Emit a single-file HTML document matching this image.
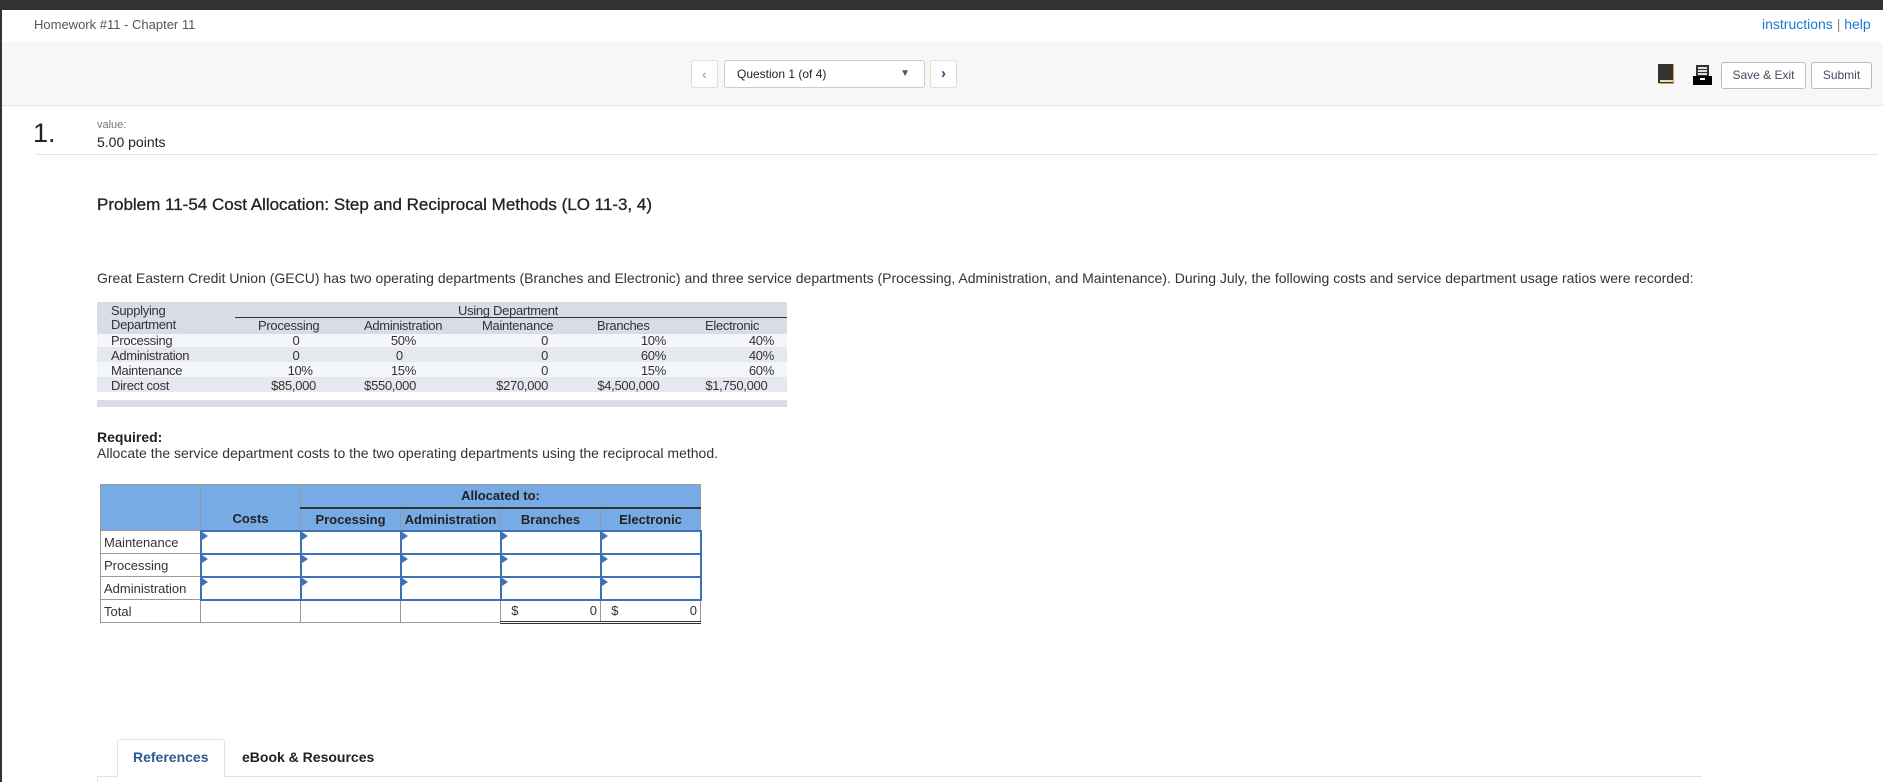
<!DOCTYPE html>
<html><head><meta charset="utf-8"><style>
*{margin:0;padding:0;box-sizing:border-box}
body{width:1883px;height:782px;overflow:hidden;background:#fff;font-family:"Liberation Sans",Arial,sans-serif;position:relative;color:#333}
.a{position:absolute;white-space:nowrap}
.dt{font-size:13px;color:#333;letter-spacing:-0.3px}
.r{text-align:right}
.c{text-align:center}
table.ans{position:absolute;left:100px;top:484px;border-collapse:collapse;font-size:13px}
table.ans td{border:1px solid #999;height:23px;width:100px;padding:0 3px}
.h{background:#77abe6;font-weight:bold;text-align:center;color:#222}
.in{position:relative;border:2px solid #3f72b5!important}
.in:before{content:"";position:absolute;left:0;top:0;border-left:6px solid #3f72b5;border-top:4px solid transparent;border-bottom:4px solid transparent}
</style></head><body>
<div class="a" style="left:0;top:0;width:1883px;height:10px;background:#333"></div>
<div class="a" style="left:0;top:0;width:2px;height:782px;background:#333"></div>
<div class="a" style="left:34px;top:17px;font-size:13px;color:#555">Homework #11 - Chapter 11</div>
<div class="a" style="left:1762px;top:16px;font-size:14px;color:#1a7ad4">instructions <span style="color:#888">|</span> help</div>
<div class="a" style="left:2px;top:42px;width:1881px;height:64px;background:#f7f7f7;border-bottom:1px solid #e6e6e6"></div>
<div class="a" style="left:691px;top:60px;width:27px;height:28px;border:1px solid #ddd;border-radius:3px;background:#fff;color:#7a9cc6;font-size:14px;text-align:center;line-height:26px">&lsaquo;</div>
<div class="a" style="left:724px;top:60px;width:201px;height:28px;border:1px solid #ccc;border-radius:3px;background:#fff;font-size:12px;color:#222;line-height:26px;padding-left:12px">Question 1 (of 4)<span style="position:absolute;right:14px;top:0;color:#555;font-size:10px">&#9660;</span></div>
<div class="a" style="left:930px;top:60px;width:27px;height:28px;border:1px solid #ddd;border-radius:3px;background:#fff;color:#1a4f8b;font-size:15px;font-weight:bold;text-align:center;line-height:25px">&rsaquo;</div>
<svg class="a" style="left:1657px;top:64px" width="18" height="21" viewBox="0 0 18 21"><rect x="2" y="0" width="15" height="20" fill="#e89a2c"/><rect x="1" y="0" width="15" height="19" fill="#333"/><rect x="3" y="16" width="13" height="2" fill="#ddd"/></svg>
<svg class="a" style="left:1693px;top:65px" width="19" height="20" viewBox="0 0 19 20"><rect x="3" y="0" width="13" height="12" fill="#333"/><rect x="5" y="2" width="9" height="8" fill="#ddd"/><rect x="5" y="4" width="9" height="1" fill="#333"/><rect x="5" y="7" width="9" height="1" fill="#333"/><rect x="0" y="11" width="19" height="9" fill="#000"/><rect x="7" y="13" width="5" height="2" fill="#fff"/></svg>
<div class="a" style="left:1721px;top:62px;width:85px;height:27px;border:1px solid #bbb;border-radius:3px;background:#fff;font-size:12px;color:#444b5e;text-align:center;line-height:25px">Save &amp; Exit</div>
<div class="a" style="left:1811px;top:62px;width:61px;height:27px;border:1px solid #bbb;border-radius:3px;background:#fff;font-size:12px;color:#444b5e;text-align:center;line-height:25px">Submit</div>
<div class="a" style="left:33px;top:118px;font-size:27px;color:#222">1.</div>
<div class="a" style="left:97px;top:119px;font-size:11px;color:#777">value:</div>
<div class="a" style="left:97px;top:134px;font-size:14px;color:#222">5.00 points</div>
<div class="a" style="left:36px;top:154px;width:1842px;height:1px;background:#e3e3e3"></div>
<div class="a" style="left:97px;top:195px;font-size:17px;color:#222;-webkit-text-stroke:0.3px #222">Problem 11-54 Cost Allocation: Step and Reciprocal Methods (LO 11-3, 4)</div>
<div class="a" style="left:97px;top:270px;font-size:14px;color:#333;letter-spacing:0px">Great Eastern Credit Union (GECU) has two operating departments (Branches and Electronic) and three service departments (Processing, Administration, and Maintenance). During July, the following costs and service department usage ratios were recorded:</div>
<!-- data table -->
<div class="a" style="left:97px;top:302px;width:690px;height:32px;background:#d9dce6"></div>
<div class="a" style="left:97px;top:347px;width:690px;height:15px;background:#e6e8ef"></div>
<div class="a" style="left:97px;top:377px;width:690px;height:15px;background:#e6e8ef"></div>
<div class="a" style="left:97px;top:334px;width:690px;height:13px;background:#f5f6f9"></div>
<div class="a" style="left:97px;top:362px;width:690px;height:15px;background:#f5f6f9"></div>
<div class="a" style="left:97px;top:400px;width:690px;height:7px;background:#d9dce6"></div>
<div class="a" style="left:235px;top:317px;width:552px;height:1px;background:#333"></div>
<div class="a dt" style="left:111px;top:303px">Supplying</div>
<div class="a dt" style="left:111px;top:317px">Department</div>
<div class="a dt" style="left:458px;top:303px">Using Department</div>
<div class="a dt" style="left:258px;top:318px">Processing</div>
<div class="a dt" style="left:364px;top:318px">Administration</div>
<div class="a dt" style="left:482px;top:318px">Maintenance</div>
<div class="a dt" style="left:597px;top:318px">Branches</div>
<div class="a dt" style="left:705px;top:318px">Electronic</div>
<div class="a dt" style="left:111px;top:333px;line-height:15px">Processing<br>Administration<br>Maintenance<br>Direct cost</div>
<div class="a dt r" style="left:250px;width:66px;top:333px;line-height:15px">0&nbsp;&nbsp;&nbsp;&nbsp;&nbsp;<br>0&nbsp;&nbsp;&nbsp;&nbsp;&nbsp;<br>10%&nbsp;<br>$85,000</div>
<div class="a dt r" style="left:350px;width:66px;top:333px;line-height:15px">50%<br>0&nbsp;&nbsp;&nbsp;&nbsp;<br>15%<br>$550,000</div>
<div class="a dt r" style="left:480px;width:68px;top:333px;line-height:15px">0<br>0<br>0<br>$270,000</div>
<div class="a dt r" style="left:570px;width:96px;top:333px;line-height:15px">10%<br>60%<br>15%<br>$4,500,000&nbsp;&nbsp;</div>
<div class="a dt r" style="left:680px;width:94px;top:333px;line-height:15px">40%<br>40%<br>60%<br>$1,750,000&nbsp;&nbsp;</div>
<div class="a" style="left:97px;top:429px;font-size:14px;font-weight:bold;color:#222">Required:</div>
<div class="a" style="left:97px;top:445px;font-size:14px;color:#333;letter-spacing:0px">Allocate the service department costs to the two operating departments using the reciprocal method.</div>
<table class="ans">
<tr><td class="h" style="border-bottom:none"></td><td class="h" style="border-bottom:none"></td><td class="h" colspan="4" style="border-bottom:2px solid #333">Allocated to:</td></tr>
<tr><td class="h" style="border-top:none"></td><td class="h" style="border-top:none">Costs</td><td class="h">Processing</td><td class="h" style="padding:0">Administration</td><td class="h">Branches</td><td class="h">Electronic</td></tr>
<tr><td>Maintenance</td><td class="in"></td><td class="in"></td><td class="in"></td><td class="in"></td><td class="in"></td></tr>
<tr><td>Processing</td><td class="in"></td><td class="in"></td><td class="in"></td><td class="in"></td><td class="in"></td></tr>
<tr><td>Administration</td><td class="in"></td><td class="in"></td><td class="in"></td><td class="in"></td><td class="in"></td></tr>
<tr><td>Total</td><td></td><td></td><td></td><td style="border-bottom:3px double #333">&nbsp;&nbsp;$<span style="float:right">0</span></td><td style="border-bottom:3px double #333">&nbsp;&nbsp;$<span style="float:right">0</span></td></tr>
</table>
<div class="a" style="left:97px;top:776px;width:1605px;height:1px;background:#e3e3e3"></div>
<div class="a" style="left:97px;top:776px;width:1px;height:6px;background:#e3e3e3"></div>
<div class="a" style="left:117px;top:739px;width:108px;height:39px;border:1px solid #e3e3e3;border-bottom:none;border-radius:3px 3px 0 0;background:#fff"></div>
<div class="a" style="left:133px;top:749px;font-size:14px;font-weight:bold;color:#2c5b95">References</div>
<div class="a" style="left:242px;top:749px;font-size:14px;font-weight:bold;color:#222">eBook &amp; Resources</div>
</body></html>
